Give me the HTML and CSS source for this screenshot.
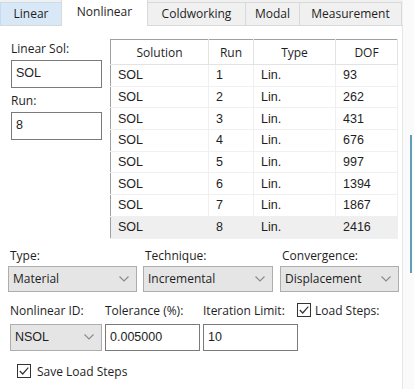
FILE: index.html
```html
<!DOCTYPE html>
<html lang="en">
<head>
  <meta charset="UTF-8">
  <title>Nonlinear Settings</title>
  <link rel="stylesheet" href="styles.css">
</head>
<body>
  <div class="window">
    <div class="dialog">
      <div class="tabs">
        <div class="tab tab-hover tab-linear">Linear</div>
        <div class="tab tab-active tab-nonlinear">Nonlinear</div>
        <div class="tab tab-cold">Coldworking</div>
        <div class="tab tab-modal">Modal</div>
        <div class="tab tab-measure">Measurement</div>
      </div>

      <div class="panel">
        <div class="top">
          <div class="left-col">
            <div class="label">Linear Sol:</div>
            <div class="textbox tb-left">SOL</div>
            <div class="label label-run">Run:</div>
            <div class="textbox tb-left">8</div>
          </div>

          <table class="grid">
            <thead>
              <tr>
                <th class="c-sol">Solution</th>
                <th class="c-run">Run</th>
                <th class="c-type">Type</th>
                <th class="c-dof">DOF</th>
              </tr>
            </thead>
            <tbody>
              <tr><td>SOL</td><td>1</td><td>Lin.</td><td>93</td></tr>
              <tr><td>SOL</td><td>2</td><td>Lin.</td><td>262</td></tr>
              <tr><td>SOL</td><td>3</td><td>Lin.</td><td>431</td></tr>
              <tr><td>SOL</td><td>4</td><td>Lin.</td><td>676</td></tr>
              <tr><td>SOL</td><td>5</td><td>Lin.</td><td>997</td></tr>
              <tr><td>SOL</td><td>6</td><td>Lin.</td><td>1394</td></tr>
              <tr><td>SOL</td><td>7</td><td>Lin.</td><td>1867</td></tr>
              <tr class="selected"><td>SOL</td><td>8</td><td>Lin.</td><td>2416</td></tr>
            </tbody>
          </table>
        </div>

        <div class="combos">
          <div class="field f-type">
            <div class="label">Type:</div>
            <div class="combo">
              <span>Material</span>
              <svg class="chev" width="10" height="6" viewBox="0 0 10 6"><path d="M0.5 0.5 L5 5 L9.5 0.5" fill="none" stroke="#8a8a8a" stroke-width="1.1"/></svg>
            </div>
          </div>
          <div class="field f-tech">
            <div class="label">Technique:</div>
            <div class="combo">
              <span>Incremental</span>
              <svg class="chev" width="10" height="6" viewBox="0 0 10 6"><path d="M0.5 0.5 L5 5 L9.5 0.5" fill="none" stroke="#8a8a8a" stroke-width="1.1"/></svg>
            </div>
          </div>
          <div class="field f-conv">
            <div class="label">Convergence:</div>
            <div class="combo">
              <span>Displacement</span>
              <svg class="chev" width="10" height="6" viewBox="0 0 10 6"><path d="M0.5 0.5 L5 5 L9.5 0.5" fill="none" stroke="#8a8a8a" stroke-width="1.1"/></svg>
            </div>
          </div>
        </div>

        <div class="params">
          <div class="label">Nonlinear ID:</div>
          <div class="label">Tolerance (%):</div>
          <div class="label">Iteration Limit:</div>
          <div class="check check-load">
            <span class="box">
              <svg width="12" height="12" viewBox="0 0 12 12"><path d="M1.8 6 L4.7 9 L10.3 2.7" fill="none" stroke="#333" stroke-width="1.2"/></svg>
            </span>
            <span>Load Steps:</span>
          </div>

          <div class="combo combo-id">
            <span>NSOL</span>
            <svg class="chev" width="10" height="6" viewBox="0 0 10 6"><path d="M0.5 0.5 L5 5 L9.5 0.5" fill="none" stroke="#8a8a8a" stroke-width="1.1"/></svg>
          </div>
          <div class="textbox">0.005000</div>
          <div class="textbox">10</div>
          <div></div>
        </div>

        <div class="check check-save">
          <span class="box">
            <svg width="12" height="12" viewBox="0 0 12 12"><path d="M1.8 6 L4.7 9 L10.3 2.7" fill="none" stroke="#333" stroke-width="1.2"/></svg>
          </span>
          <span>Save Load Steps</span>
        </div>
      </div>
    </div>

    <div class="side">
      <div class="side-line"></div>
    </div>
  </div>
</body>
</html>
```

FILE: styles.css
```css
body {
  margin: 0;
  font-family: "Open Sans", "Noto Sans", sans-serif;
  font-size: 12px;
  color: #1e1e1e;
  background: #f8f8f8;
}
.window {
  display: flex;
  width: 414px;
  height: 389px;
  overflow: hidden;
}
.dialog {
  width: 403px;
  display: flex;
  flex-direction: column;
}

/* tabs */
.tabs {
  display: flex;
  align-items: flex-end;
  height: 26px;
  background: #f0f0f0;
  border-bottom: 1px solid #d9d9d9;
  box-sizing: border-box;
}
.tab {
  height: 23px;
  line-height: 22px;
  text-align: center;
  background: #f0f0f0;
  border: 1px solid #d9d9d9;
  border-bottom: none;
  box-sizing: border-box;
  margin-left: -1px;
}
.tab-hover {
  background: #d8e8f7;
  border-color: #c8dcef;
  margin-left: 0;
}
.tab-active {
  height: 27px;
  line-height: 24px;
  background: #fff;
  margin-bottom: -1px;
  position: relative;
}
.tab-linear { width: 62px; }
.tab-nonlinear { width: 87px; }
.tab-cold { width: 99px; }
.tab-modal { width: 55px; }
.tab-measure { width: 103px; }

/* panel */
.panel {
  flex: 1;
  background: #fff;
  border-right: 1px solid #e6e6e6;
  padding: 13px 0 0 0;
}
.top {
  display: flex;
  gap: 8px;
  margin-left: 11px;
}
.left-col {
  width: 91px;
  padding-top: 2px;
}
.label {
  height: 15px;
  line-height: 15px;
  white-space: nowrap;
}
.label-run {
  margin-top: 5px;
}
.textbox {
  height: 27px;
  line-height: 25px;
  border: 1px solid #7a7a7a;
  box-sizing: border-box;
  padding-left: 4px;
  background: #fff;
  font-family: "Liberation Sans", Arial, sans-serif;
  font-size: 12.5px;
}
.tb-left {
  height: 28px;
  margin-top: 4px;
}

/* list */
.grid {
  width: 288px;
  border-collapse: collapse;
  border: 1px solid #a0a0a0;
  font-family: "Liberation Sans", Arial, sans-serif;
  font-size: 12.5px;
}
.grid th {
  height: 24px;
  font-family: "Open Sans", sans-serif;
  font-size: 12px;
  font-weight: normal;
  text-align: center;
  border-right: 1px solid #e3e3e3;
  border-bottom: 1px solid #e3e3e3;
  padding: 0;
}
.grid td {
  height: 20.7px;
  padding: 0 0 0 7px;
  border-right: 1px solid #f0f0f0;
  border-bottom: 1px solid #f0f0f0;
}
.c-sol { width: 97px; }
.c-run { width: 44px; }
.c-type { width: 81px; }
.selected td {
  background: #efefef;
}

/* combos */
.combos {
  display: flex;
  margin: 9px 0 0 8px;
}
.field .label {
  padding-left: 2px;
}
.field .combo {
  margin-top: 3px;
}
.f-type { width: 129px; }
.f-tech { width: 130px; margin-left: 6px; }
.f-conv { width: 119px; margin-left: 7px; }
.combo {
  display: flex;
  align-items: center;
  justify-content: space-between;
  height: 26px;
  padding: 0 7px 0 4px;
  background: #e5e5e5;
  border: 1px solid #adadad;
  box-sizing: border-box;
}

/* parameters */
.params {
  display: grid;
  grid-template-columns: 92px 95px 95px auto;
  column-gap: 3px;
  row-gap: 6px;
  margin: 11px 0 0 10px;
}
.combo-id {
  height: 27px;
  font-family: "Liberation Sans", Arial, sans-serif;
  font-size: 12.5px;
}
.check {
  display: flex;
  align-items: center;
  gap: 4px;
  white-space: nowrap;
}
.check-load {
  height: 15px;
  margin-left: -4px;
}
.box {
  width: 14px;
  height: 14px;
  border: 1px solid #333;
  box-sizing: border-box;
  display: flex;
  align-items: center;
  justify-content: center;
  background: #fff;
}
.check-save {
  margin: 12px 0 0 17px;
  gap: 6px;
}

/* strip of the window behind */
.side {
  flex: 1;
  background: #fafafa;
}
.side-line {
  margin: 135px 0 0 7px;
  width: 2px;
  height: 138px;
  background: #5f9cb8;
}
```
